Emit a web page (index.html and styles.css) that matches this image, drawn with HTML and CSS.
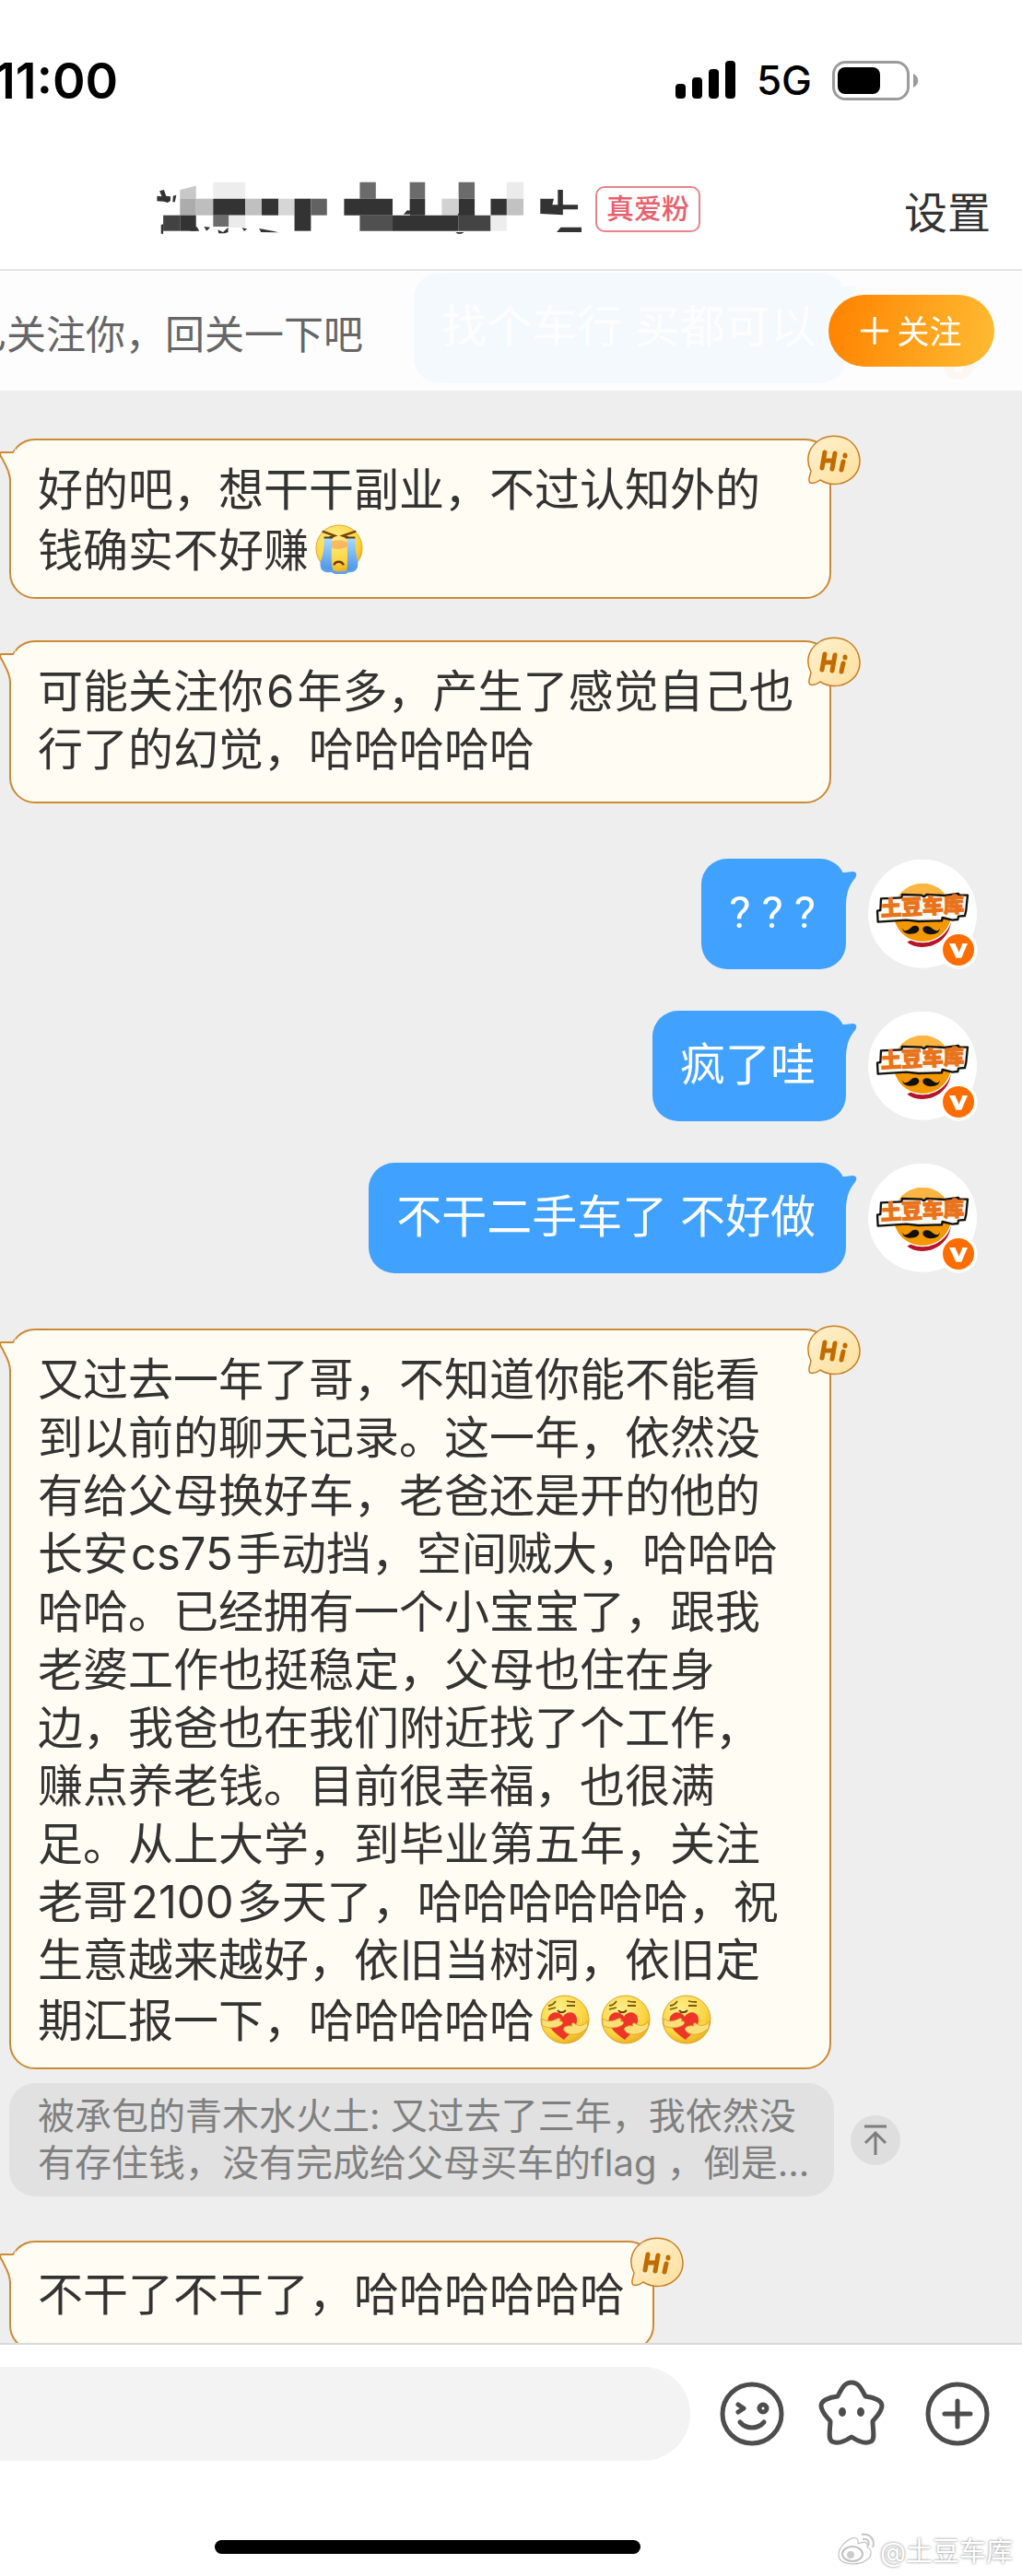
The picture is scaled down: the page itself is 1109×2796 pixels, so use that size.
FILE: index.html
```html
<!DOCTYPE html>
<html lang="zh-CN">
<head>
    <meta charset="UTF-8">
    <meta name="viewport" content="width=device-width, initial-scale=1.0">
    <title>私信</title>
    <link rel="stylesheet" href="styles.css">
</head>
<body>

<!-- shared drawings -->
<svg class="defs" width="0" height="0" aria-hidden="true">
    <defs>
        <linearGradient id="hiFill" x1="0" y1="0" x2="1" y2="1">
            <stop offset="0" stop-color="#fff1cf"/>
            <stop offset="1" stop-color="#ffdf9c"/>
        </linearGradient>
        <radialGradient id="faceFill" cx="0.4" cy="0.3" r="0.75">
            <stop offset="0" stop-color="#fff08a"/>
            <stop offset="0.7" stop-color="#fbd340"/>
            <stop offset="1" stop-color="#e9a91c"/>
        </radialGradient>
        <linearGradient id="tearFill" x1="0" y1="0" x2="0" y2="1">
            <stop offset="0" stop-color="#a9dcff"/>
            <stop offset="1" stop-color="#4a93e8"/>
        </linearGradient>
    </defs>
    <symbol id="avatar" viewBox="33 36 360 360">
        <circle cx="213" cy="215" r="177" fill="#fff"/>
        <path d="M306 222C312 280 265 326 210 324C190 323 175 317 163 308Z" fill="#b5152b"/>
        <circle cx="213" cy="211" r="99" fill="#fff"/>
        <circle cx="213" cy="211" r="94" fill="#f7a81c"/>
        <path d="M121 226C160 244 245 244 306 222C300 270 264 305 213 305C162 305 126 270 121 226Z" fill="#f39800"/>
        <path d="M128 172C140 140 175 116 215 117C245 117 270 130 286 152L262 158L140 166Z" fill="#fbb540"/>
        <path d="M78 166L145 163L147 153L210 155L218 160L226 153L285 156L330 150L332 155L360 155L355 204L351 222L330 224L328 234L310 236L278 228L276 238L200 240L160 236L68 242L66 206L76 204Z" fill="#fffaf0" stroke="#111" stroke-width="7" stroke-linejoin="round"/>
        <text class="avatar-name" x="78" y="223" transform="rotate(-3 78 223)">土豆车库</text>
        <path d="M149 263C152 276 165 271 175 261C185 250 200 253 202 264C202 277 186 282 171 281C156 279 146 272 149 263Z" fill="#111"/>
        <path d="M268 263C265 276 252 271 243 262C233 252 215 254 214 265C214 278 230 284 246 282C261 281 271 272 268 263Z" fill="#111"/>
        <circle cx="330" cy="333" r="62" fill="#fff"/>
        <circle cx="330" cy="333" r="51" fill="#ff6d00"/>
        <path d="M300 312H319L332 341L343 312H360L340 359H322Z" fill="#fff"/>
    </symbol>
    <symbol id="hi" viewBox="0 0 58 55">
        <path d="M4 39C-2 28 1 15 10 8C20-1 38-1 48 8C58 17 60 33 52 43C43 54 27 57 14 49C10 52 6 53 3 52C0 49 3 45 4 39Z" fill="url(#hiFill)" stroke="#c77f22" stroke-width="1.5"/>
        <path d="M19 19L16 36M30 20L27 37M18 28H28M39 29L37 38M41 22V23" fill="none" stroke="#c06c00" stroke-width="5" stroke-linecap="round"/>
    </symbol>
    <symbol id="tail-left" viewBox="0 0 17 46">
        <path d="M15 16C10 15 5 16 1 15C-2 17 2 20 4 25C8 32 10 36 11 44L17 44V10Z" fill="#fffdf3"/>
        <path d="M15 15C10 15 5 15 1 15C-2 17 2 20 4 25C8 32 11 38 11 46" fill="none" stroke="#cc8a35" stroke-width="2"/>
    </symbol>
    <symbol id="tail-right" viewBox="0 0 20 50">
        <path d="M0 15C6 16 10 14 16 14C20 15 20 18 18 21C12 28 9 35 8 48L0 48Z" fill="#40a1ff"/>
    </symbol>
    <symbol id="hug" viewBox="0 0 54 54">
        <circle cx="27" cy="27" r="26" fill="url(#faceFill)" stroke="#d9a72a"/>
        <path d="M9 12C12 12 15 10 17 7M29 7C32 8 35 8 38 8M9 16L17 14M29 12H38" fill="none" stroke="#7a5a10" stroke-width="1.8"/>
        <path d="M19 17C21 20 25 20 28 17" fill="none" stroke="#6a3f08" stroke-width="2"/>
        <path d="M26 49C19 44 6 35 9 25C12 17 22 18 25 24C29 17 39 18 40 26C41 35 33 42 26 49Z" fill="#ee3528"/>
        <path d="M2 26C7 30 13 29 19 26C22 25 23 27 21 29C25 28 26 31 23 33C17 37 8 37 2 33Z" fill="#fbe07a" stroke="#d79c22" stroke-width="0.8"/>
        <path d="M52 29C47 34 42 35 37 31C34 30 34 33 35 34C28 33 24 36 26 39C30 45 43 45 51 36Z" fill="#fbe07a" stroke="#d79c22" stroke-width="0.8"/>
    </symbol>
    <symbol id="cry" viewBox="0 0 54 56">
        <circle cx="27" cy="27" r="26" fill="url(#faceFill)" stroke="#d9a72a"/>
        <ellipse cx="26" cy="23" rx="11" ry="5" fill="#f79a55" opacity="0.6"/>
        <path d="M10 15H19C19 28 17 40 20 52C11 54 4 50 6 42C10 33 10 24 10 15ZM36 15H45C45 25 46 35 48 43C49 50 43 54 36 52C37 40 36 28 36 15Z" fill="url(#tearFill)"/>
        <path d="M6 47C10 50 14 51 18 51C24 54 32 54 37 51C41 52 46 50 48 46C48 52 43 55 38 54C32 58 22 57 18 54C12 55 6 53 6 47Z" fill="#5ba0ea"/>
        <path d="M8 8L22 13L16 15M46 8L31 13L37 15" fill="none" stroke="#75420b" stroke-width="2.4"/>
        <path d="M10 15H20M34 15H45" stroke="#5c3a12" stroke-width="2"/>
        <path d="M21 46C23 41 30 41 32 46" fill="none" stroke="#6d3a0a" stroke-width="2.4"/>
    </symbol>
</svg>

<div class="app">
    <div class="status-bar">
        <span class="time">11:00</span>
        <div class="status-icons">
            <svg width="66" height="42" viewBox="0 0 66 42">
                <rect x="0" y="25" width="11" height="16" rx="4"/>
                <rect x="18" y="18" width="11" height="23" rx="4"/>
                <rect x="36" y="9" width="11" height="32" rx="4"/>
                <rect x="54" y="0" width="11" height="41" rx="4"/>
            </svg>
            <span class="network">5G</span>
            <svg width="94" height="43" viewBox="0 0 94 43">
                <rect x="1.5" y="1.5" width="81" height="40" rx="13" fill="none" stroke="#9b9b9b" stroke-width="3"/>
                <rect x="6" y="7" width="46" height="29" rx="8"/>
                <path d="M88 14C95 17 95 26 88 29Z" fill="#9b9b9b"/>
            </svg>
        </div>
    </div>

    <header class="nav">
        <div class="nav-title">
            <svg class="masked-name" viewBox="45 40 1175 180" preserveAspectRatio="none" fill="#333">
                <path d="M51 90L64 92L58 74L70 70L76 90L88 92V106L80 112L70 108L51 107ZM95 90L104 87L100 110H94Z"/>
                <path d="M114 70L158 57V99H114Z" fill="#c8c8c8"/>
                <path d="M205 45H293V99H205Z" fill="#ededed"/>
                <path d="M114 99H158V153H114Z" fill="#acacac"/>
                <path d="M158 99H205V153H158Z" fill="#bebebe"/>
                <path d="M205 99H293V153H205Z"/>
                <path d="M293 99H338V153H293Z" fill="#c0c0c0"/>
                <path d="M338 99H384V153H338Z"/>
                <path d="M384 99H428V153H384Z" fill="#d6d6d6"/>
                <path d="M428 99H473V204H428Z"/>
                <path d="M473 99H517V153H473Z" fill="#626262"/>
                <path d="M68 153H114V204H68Z" fill="#424242"/>
                <path d="M114 153H158V204H114Z"/>
                <path d="M205 153H248V190H205Z" fill="#6c6c6c"/>
                <path d="M248 153H293V193H248Z" fill="#ebebeb"/>
                <path d="M62 184L68 182V213H62ZM140 204L160 190L167 204ZM180 190L197 192L187 204ZM218 200L232 208L246 192V208L236 212H220ZM284 194L298 197L290 205ZM331 196C350 200 368 203 384 209L336 208Z"/>
                <path d="M607 45H651V99H607ZM744 45H786V99H744ZM878 45H922V99H878Z" fill="#6b6b6b"/>
                <path d="M564 99H697V153H564ZM744 99H786V153H744ZM878 99H922V153H878ZM966 99H1010V153H966Z"/>
                <path d="M832 99H878V153H832Z" fill="#d2d2d2"/>
                <path d="M1010 45H1056V99H1010Z" fill="#ebebeb"/>
                <path d="M1010 99H1056V153H1010Z" fill="#c2c2c2"/>
                <path d="M607 153H697V204H607Z" fill="#505050"/>
                <path d="M697 153H878V204H697Z"/>
                <path d="M878 153H966V204H878Z" fill="#444"/>
                <path d="M966 153H1010V204H966Z" fill="#ededed"/>
                <path d="M727 150L737 137L756 140L742 150ZM876 149L887 142L922 146V153H876ZM870 208H893L886 213H875Z"/>
                <path d="M1102 99H1139L1135 119H1150V70H1164V119H1205V134H1164V152L1102 148ZM1158 192H1215V208H1147Z"/>
            </svg>
            <span class="fan-tag">真爱粉</span>
        </div>
        <button class="nav-setting" type="button">设置</button>
    </header>

    <section class="follow-bar">
        <div class="row row-mine row-faded">
            <div class="bubble bubble-mine">找个车行 买都可以
                <svg class="tail-right"><use href="#tail-right"/></svg>
            </div>
            <svg class="avatar"><use href="#avatar"/></svg>
        </div>
        <p class="follow-text">已关注你，回关一下吧</p>
        <button class="follow-btn" type="button">
            <svg width="30" height="30" viewBox="0 0 30 30"><path d="M15 1V29M1 15H29" stroke="#fff" stroke-width="3" stroke-linecap="round"/></svg>
            <span>关注</span>
        </button>
    </section>

    <main class="chat">
        <div class="row">
            <div class="bubble bubble-other with-emoji">好的吧，想干干副业，不过认知外的钱确实不好赚<svg class="emoji"><use href="#cry"/></svg>
                <svg class="tail-left"><use href="#tail-left"/></svg>
                <svg class="hi"><use href="#hi"/></svg>
            </div>
        </div>
        <div class="row">
            <div class="bubble bubble-other">可能关注你<span class="latin">6</span>年多，产生了感觉自己也行了的幻觉，哈哈哈哈哈
                <svg class="tail-left"><use href="#tail-left"/></svg>
                <svg class="hi"><use href="#hi"/></svg>
            </div>
        </div>

        <div class="row row-mine turn">
            <div class="bubble bubble-mine marks">? ? ?
                <svg class="tail-right"><use href="#tail-right"/></svg>
            </div>
            <svg class="avatar"><use href="#avatar"/></svg>
        </div>
        <div class="row row-mine">
            <div class="bubble bubble-mine">疯了哇
                <svg class="tail-right"><use href="#tail-right"/></svg>
            </div>
            <svg class="avatar"><use href="#avatar"/></svg>
        </div>
        <div class="row row-mine">
            <div class="bubble bubble-mine">不干二手车了 不好做
                <svg class="tail-right"><use href="#tail-right"/></svg>
            </div>
            <svg class="avatar"><use href="#avatar"/></svg>
        </div>

        <div class="row turn">
            <div class="bubble bubble-other with-emoji">又过去一年了哥，不知道你能不能看到以前的聊天记录。这一年，依然没有给父母换好车，老爸还是开的他的长安<span class="latin">cs75</span>手动挡，空间贼大，哈哈哈哈哈。已经拥有一个小宝宝了，跟我老婆工作也挺稳定，父母也住在身边，我爸也在我们附近找了个工作，赚点养老钱。目前很幸福，也很满足。从上大学，到毕业第五年，关注老哥<span class="latin">2100</span>多天了，哈哈哈哈哈哈，祝生意越来越好，依旧当树洞，依旧定期汇报一下，哈哈哈哈哈<svg class="emoji"><use href="#hug"/></svg><svg class="emoji"><use href="#hug"/></svg><svg class="emoji"><use href="#hug"/></svg>
                <svg class="tail-left"><use href="#tail-left"/></svg>
                <svg class="hi"><use href="#hi"/></svg>
            </div>
        </div>
        <div class="row row-quote">
            <div class="quote">被承包的青木水火土: 又过去了三年，我依然没有存住钱，没有完成给父母买车的<span class="latin">flag</span> ，倒是...</div>
            <button class="jump" type="button" aria-label="回到原消息">
                <svg width="28" height="34" viewBox="0 0 28 34" fill="none" stroke="#7d7d7d" stroke-width="3"><path d="M2 2H26M14 33V9M3 20L14 9L25 20"/></svg>
            </button>
        </div>

        <div class="row row-last">
            <div class="bubble bubble-other">不干了不干了，哈哈哈哈哈哈
                <svg class="tail-left"><use href="#tail-left"/></svg>
                <svg class="hi"><use href="#hi"/></svg>
            </div>
        </div>
    </main>

    <footer class="footer">
        <div class="composer">
            <input class="message-input" type="text" aria-label="消息">
            <button class="icon-btn" type="button" aria-label="表情">
                <svg viewBox="0 0 72 72" fill="none" stroke="#4d4d4d" stroke-width="5" stroke-linecap="round" stroke-linejoin="round">
                    <circle cx="37" cy="36" r="32"/>
                    <path d="M22 26L28 30L22 34M24 45C31 53 43 53 50 45"/>
                    <circle cx="49" cy="30" r="4"/>
                </svg>
            </button>
            <button class="icon-btn" type="button" aria-label="收藏表情">
                <svg viewBox="0 0 72 72" fill="none" stroke="#4d4d4d" stroke-width="5" stroke-linejoin="round">
                    <path d="M33 2C41 2 44 9 48 17C58 18 66 22 66 27C66 34 60 39 56 44C56 53 59 64 54 66C48 69 39 65 33 61C27 65 18 69 12 66C7 63 10 53 10 44C6 39 0 34 0 27C0 22 8 18 18 17C22 9 25 2 33 2Z"/>
                    <ellipse cx="23" cy="34" rx="4" ry="5" fill="#4d4d4d" stroke="none"/>
                    <ellipse cx="43" cy="34" rx="4" ry="5" fill="#4d4d4d" stroke="none"/>
                </svg>
            </button>
            <button class="icon-btn" type="button" aria-label="更多">
                <svg viewBox="0 0 72 72" fill="none" stroke="#4d4d4d" stroke-width="5" stroke-linecap="round">
                    <circle cx="36" cy="36" r="32"/>
                    <path d="M36 22V50M22 36H50"/>
                </svg>
            </button>
        </div>
        <div class="home-indicator"></div>
        <div class="watermark">
            <svg width="42" height="36" viewBox="0 0 42 36">
                <path d="M1 24C1 14 14 4 20 6C23 7 22 10 22 12C28 9 34 10 32 16C38 18 37 26 32 29C24 36 1 36 1 24Z" fill="#fff" stroke="#c4c4c4" stroke-width="1.2"/>
                <ellipse cx="16" cy="23" rx="11" ry="8" fill="#fff" stroke="#c0c0c0" stroke-width="2"/>
                <circle cx="14" cy="24" r="4" fill="#ccc"/>
                <path d="M26 2C35 0 41 8 38 16M27 7C32 6 35 10 33 14" fill="none" stroke="#c4c4c4" stroke-width="2"/>
            </svg>
            <span>@土豆车库</span>
        </div>
    </footer>
</div>

</body>
</html>
```
FILE: styles.css
```css
* {
    box-sizing: border-box;
}
body {
    margin: 0;
    background: #fff;
    color: #333;
    font-family: Inter, "Noto Sans CJK SC", sans-serif;
    text-spacing-trim: space-all;
}
button {
    border: none;
    padding: 0;
    background: none;
    color: inherit;
    font-family: inherit;
    cursor: pointer;
}
.defs {
    position: absolute;
}
.app {
    display: flex;
    flex-direction: column;
    height: 100vh;
    overflow: hidden;
}

/* status bar */
.status-bar {
    display: flex;
    justify-content: space-between;
    align-items: center;
    height: 174px;
    padding-right: 112px;
    color: #000;
}
.time {
    margin-left: -6px;
    font-size: 54px;
    font-weight: 600;
}
.status-icons {
    display: flex;
    align-items: center;
    gap: 22px;
}
.network {
    font-size: 44px;
    font-weight: 500;
}

/* title */
.nav {
    display: flex;
    justify-content: space-between;
    align-items: center;
    height: 120px;
    padding: 0 34px 12px 168px;
    border-bottom: 2px solid #e4e4e4;
}
.nav-title {
    display: flex;
    align-items: center;
    gap: 13px;
}
.masked-name {
    width: 465px;
    height: 60px;
    margin-bottom: 2px;
}
.fan-tag {
    height: 50px;
    padding: 0 10px;
    border: 2px solid #e6838d;
    border-radius: 10px;
    color: #e8606d;
    font-size: 30px;
    font-weight: 500;
    line-height: 45px;
}
.nav-setting {
    font-size: 47px;
}

/* follow hint */
.follow-bar {
    position: relative;
    display: flex;
    justify-content: space-between;
    align-items: center;
    height: 130px;
    padding-right: 30px;
    background: #fdfdfd;
}
.follow-text {
    margin: 0 0 0 -36px;
    padding-top: 2px;
    color: #666;
    font-size: 43px;
    white-space: nowrap;
}
.follow-btn {
    position: relative;
    display: flex;
    justify-content: center;
    align-items: center;
    gap: 9px;
    width: 180px;
    height: 78px;
    border-radius: 39px;
    background: linear-gradient(100deg, #ff8200, #ffbb33);
    color: #fff;
    font-size: 35px;
}
.follow-btn span {
    padding-bottom: 4px;
}

/* messages */
.chat {
    flex: 1;
    min-height: 0;
    overflow: hidden;
    padding-top: 52px;
    background: #eee;
}
.row {
    display: flex;
    margin-bottom: 45px;
    padding-left: 10px;
}
.row.turn {
    margin-top: 60px;
}
.row-mine {
    justify-content: flex-end;
    gap: 23px;
    padding-right: 48px;
}
.row-faded {
    position: absolute;
    top: 2px;
    right: 0;
    opacity: 0.05;
}
.bubble {
    position: relative;
    min-height: 120px;
    border-radius: 28px;
    font-size: 49px;
    line-height: 63px;
}
.bubble-other {
    max-width: 892px;
    padding: 22px 30px 25px 29px;
    border: 2px solid #cc8a35;
    background: #fffdf3;
}
.bubble-other.with-emoji {
    padding-bottom: 19px;
}
.bubble-mine {
    padding: 27px 33px 30px 30px;
    background: #40a1ff;
    color: #fff;
}
.marks {
    font-family: Roboto, sans-serif;
}
.latin {
    margin: 0 3px;
}
.emoji {
    width: 54px;
    height: 54px;
    margin: 6px 6px 0;
    vertical-align: -8px;
}
.tail-left {
    position: absolute;
    top: -2px;
    left: -12px;
    width: 17px;
    height: 46px;
}
.tail-right {
    position: absolute;
    top: 0;
    right: -12px;
    width: 20px;
    height: 50px;
}
.hi {
    position: absolute;
    top: -6px;
    right: -34px;
    width: 58px;
    height: 55px;
    overflow: visible;
}
.avatar {
    width: 120px;
    height: 120px;
}
.avatar-name {
    fill: #e8731a;
    stroke: #e8731a;
    stroke-width: 3px;
    font-family: "Noto Sans CJK SC", sans-serif;
    font-size: 68px;
    font-weight: 900;
}
.row-quote {
    align-items: center;
    gap: 18px;
    margin-top: -30px;
    margin-bottom: 48px;
}
.quote {
    width: 895px;
    padding: 10px 20px 11px 31px;
    border-radius: 28px;
    background: #e1e1e1;
    color: #808080;
    font-size: 40px;
    line-height: 51px;
}
.quote .latin {
    margin: 0;
}
.jump {
    display: flex;
    justify-content: center;
    align-items: center;
    width: 54px;
    height: 54px;
    border-radius: 50%;
    background: #dedede;
}
.row-last .bubble {
    padding-top: 25px;
    padding-bottom: 28px;
}

/* input area */
.footer {
    position: relative;
    padding: 24px 0;
    border-top: 2px solid #d9d9d9;
    background: #fff;
}
.composer {
    display: flex;
    align-items: center;
    gap: 40px;
    padding-right: 34px;
}
.message-input {
    flex: 1;
    min-width: 0;
    height: 102px;
    margin-right: -10px;
    padding: 0 40px;
    border: none;
    border-radius: 0 51px 51px 0;
    background: #f3f3f3;
    font-size: 43px;
}
.icon-btn,
.icon-btn svg {
    display: block;
    width: 72px;
    height: 72px;
    overflow: visible;
}
.home-indicator {
    width: 462px;
    height: 15px;
    margin: 86px 0 0 233px;
    border-radius: 8px;
    background: #000;
}
.watermark {
    position: absolute;
    right: 10px;
    bottom: 8px;
    display: flex;
    align-items: center;
    gap: 4px;
    color: #fff;
    font-size: 29px;
    text-shadow: 0 0 3px #777;
}
```
